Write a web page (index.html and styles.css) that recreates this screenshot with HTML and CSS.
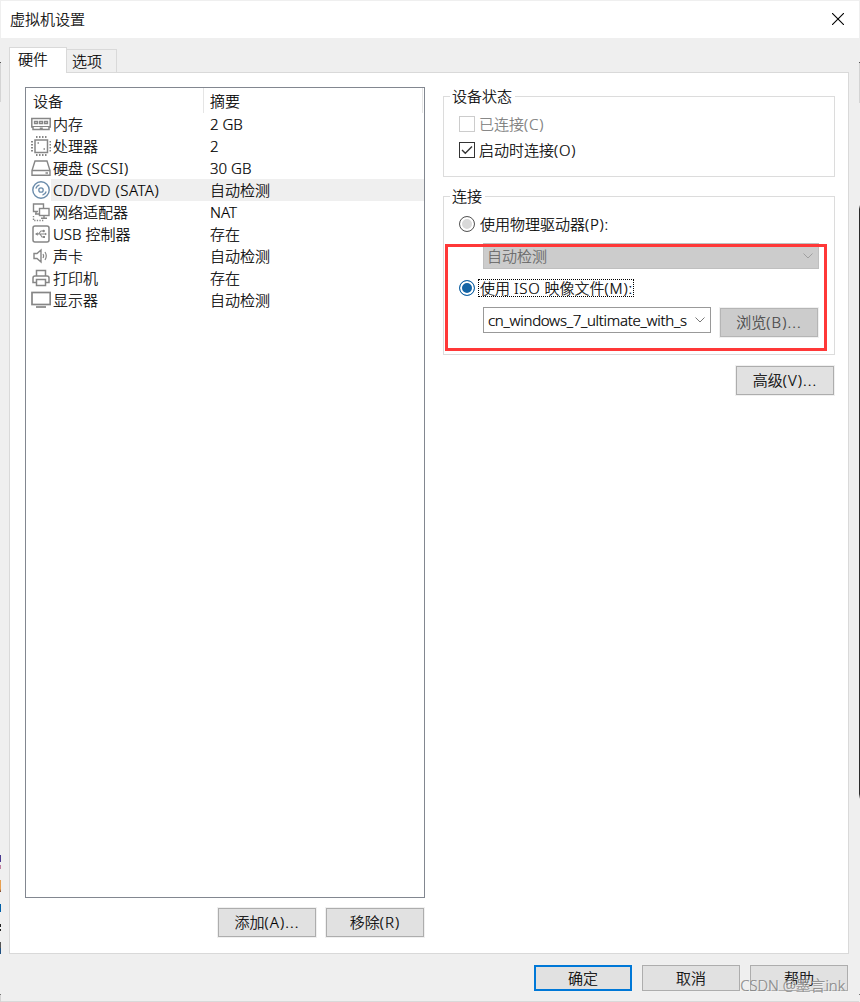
FILE: index.html
```html
<!DOCTYPE html>
<html lang="zh-CN">

<head>
    <meta charset="UTF-8">
    <meta name="viewport" content="width=device-width, initial-scale=1.0">
    <title>虚拟机设置</title>
    <link rel="stylesheet" href="styles.css">
</head>

<body>
    <div class="edge edge-left"></div>
    <div class="dialog">
        <div class="titlebar">
            <span>虚拟机设置</span>
            <svg class="close" width="12" height="12" viewBox="0 0 12 12"><path d="M0 0L12 12M12 0L0 12" stroke="#000" stroke-width="1.1"/></svg>
        </div>

        <div class="tabs">
            <div class="tab active">硬件</div>
            <div class="tab">选项</div>
        </div>

        <div class="panel">
            <div class="left">
                <div class="list">
                    <div class="list-header">
                        <div class="col-device">设备</div>
                        <div class="col-summary">摘要</div>
                    </div>
                    <div class="row">
                        <svg class="icon" viewBox="0 0 20 20" fill="none" stroke="#868686"><path d="M.8 4.5H19.2V13H18V15.5H11V14.3H9.5V15.5H2V13H.8Z" stroke-width="1.5"/><path d="M3.5 7.5H6.5V9.5H3.5ZM8.5 7.5H11.5V9.5H8.5ZM13.5 7.5H16.5V9.5H13.5Z" stroke-width="1.3"/><path d="M1 12.5H19"/></svg>
                        <div class="name">内存</div><div class="value">2 GB</div>
                    </div>
                    <div class="row">
                        <svg class="icon" viewBox="0 0 20 20" fill="none" stroke="#868686"><rect x="4" y="4" width="12.5" height="12.5" stroke-width="1.5"/><path d="M5 1H16M5 19H16" stroke-width="2" stroke-dasharray="1.5 1.5"/><path d="M1 5V16M19.5 5V16" stroke-width="2" stroke-dasharray="1.5 1.5"/><path d="M6.5 7H8M12.5 13H14" stroke-width="1.5"/></svg>
                        <div class="name">处理器</div><div class="value">2</div>
                    </div>
                    <div class="row">
                        <svg class="icon" viewBox="0 0 20 20" fill="none" stroke="#868686" stroke-width="1.4"><path d="M1 12.5L4 3H16L19 12.5V17.3H1ZM1 12.5H19M14.5 15H17"/></svg>
                        <div class="name">硬盘 <i>(SCSI)</i></div><div class="value">30 GB</div>
                    </div>
                    <div class="row selected">
                        <svg class="icon" viewBox="0 0 20 20" fill="none" stroke="#6b8cab"><circle cx="10" cy="10" r="8.2" stroke-width="1.4"/><circle cx="10" cy="10" r="2.2" stroke-width="1.3"/><path d="M4.8 8.5A5.5 5.5 0 0 1 8.5 4.8M15.2 11.5A5.5 5.5 0 0 1 11.5 15.2" stroke-width="1.3"/></svg>
                        <div class="name"><i>CD/DVD (SATA)</i></div><div class="value">自动检测</div>
                    </div>
                    <div class="row">
                        <svg class="icon" viewBox="0 0 20 20" fill="none" stroke="#868686" stroke-width="1.4"><path d="M7 9.5H2.5V2H12.5V6M4 12H8"/><rect x="8.5" y="6.5" width="9.5" height="7"/><path d="M13 13.5V16M10 16.2H16M5 9.5V12"/><path d="M2.5 14V18.5H13" stroke-dasharray="1.3 1.3"/></svg>
                        <div class="name">网络适配器</div><div class="value">NAT</div>
                    </div>
                    <div class="row">
                        <svg class="icon" viewBox="0 0 20 20" fill="none" stroke="#868686"><rect x="2" y="2" width="16" height="16" rx="2" stroke-width="1.5"/><path d="M5 10H15M7.5 10L10 7H12.5M9 10L11 13H13" stroke-width="1.1"/><path d="M4 10L6.8 8.3V11.7Z" fill="#868686" stroke="none"/><circle cx="12.7" cy="7" r="1.2" fill="#868686" stroke="none"/><path d="M12 12H14V14H12ZM14 8.8L16 10L14 11.2Z" fill="#868686" stroke="none"/></svg>
                        <div class="name">USB 控制器</div><div class="value">存在</div>
                    </div>
                    <div class="row">
                        <svg class="icon" viewBox="0 0 20 20" fill="none" stroke="#868686" stroke-width="1.4"><path d="M3 7.5H6L10 4V16L6 12.5H3Z"/><path d="M12 8Q13.2 10 12 12M14 6Q16.5 10 14 14" stroke-width="1.2"/></svg>
                        <div class="name">声卡</div><div class="value">自动检测</div>
                    </div>
                    <div class="row">
                        <svg class="icon" viewBox="0 0 20 20" fill="none" stroke="#868686" stroke-width="1.5"><path d="M5.5 8V2.5H14.5V8M5.5 14.5H2V10Q2 8 4 8H16Q18 8 18 10V14.5H14.5"/><rect x="5.5" y="11.5" width="9" height="6"/></svg>
                        <div class="name">打印机</div><div class="value">存在</div>
                    </div>
                    <div class="row">
                        <svg class="icon" viewBox="0 0 20 20" fill="none" stroke="#868686" stroke-width="1.7"><rect x="1" y="2.5" width="18.2" height="12"/><path d="M5 17H15"/></svg>
                        <div class="name">显示器</div><div class="value">自动检测</div>
                    </div>
                </div>
                <div class="list-buttons">
                    <button class="button">添加<i>(A)...</i></button>
                    <button class="button">移除<i>(R)</i></button>
                </div>
            </div>

            <div class="right">
                <div class="group status">
                    <span class="legend">设备状态</span>
                    <div class="option disabled"><span class="checkbox"></span>已连接<i>(C)</i></div>
                    <div class="option">
                        <span class="checkbox"><svg width="14" height="14" viewBox="0 0 14 14"><path d="M2 7L5.3 10.3L12 3.6" fill="none" stroke="#333" stroke-width="1.4"/></svg></span>启动时连接<i>(O)</i>
                    </div>
                </div>

                <div class="group connection">
                    <span class="legend">连接</span>
                    <div class="option"><span class="radio"></span>使用物理驱动器<i>(P):</i></div>
                    <div class="select off">自动检测
                        <svg width="10" height="6" viewBox="0 0 10 6"><path d="M.5 .5L5 5L9.5 .5" fill="none" stroke="#a0a0a0"/></svg>
                    </div>
                    <div class="option iso"><span class="radio checked"></span><span class="focus">使用 <i>ISO</i> 映像文件<i>(M):</i></span></div>
                    <div class="file-row">
                        <div class="select file"><i class="filename">cn_windows_7_ultimate_with_s</i>
                            <svg width="10" height="6" viewBox="0 0 10 6"><path d="M.5 .5L5 5L9.5 .5" fill="none" stroke="#777"/></svg>
                        </div>
                        <button class="button browse">浏览<i>(B)...</i></button>
                    </div>
                    <div class="highlight"></div>
                </div>
                <button class="button advanced">高级<i>(V)...</i></button>
            </div>
        </div>

        <div class="footer">
            <button class="button primary">确定</button>
            <button class="button">取消</button>
            <button class="button">帮助</button>
        </div>
        <div class="watermark">CSDN @墨言ink</div>
    </div>
    <div class="edge edge-right"></div>
</body>

</html>
```
FILE: styles.css
```css
* {
    box-sizing: border-box;
}

body {
    margin: 0;
    width: 860px;
    height: 1002px;
    display: flex;
    overflow: hidden;
    background-color: #efefef;
    font-family: "Noto Sans", "Noto Sans CJK SC", sans-serif;
    font-size: 15px;
    font-weight: 300;
    line-height: 22px;
    color: #000;
    white-space: nowrap;
    -webkit-text-stroke: 0.2px;
}

/* latin parts of the labels */
i {
    font-style: normal;
}

.edge {
    width: 1px;
    height: 1002px;
}

.edge-left {
    background: linear-gradient(#efefef 62px, #555 62px, #555 63px, #d4d4d4 63px, #d4d4d4 102px, #efefef 102px, #efefef 855px, #4a3a90 855px, #4a3a90 862px, #efefef 862px, #efefef 865px, #c080a0 865px, #c080a0 869px, #efefef 869px, #efefef 880px, #e8a050 880px, #e8a050 889px, #704030 892px, #efefef 892px, #efefef 904px, #0060a8 904px, #0060a8 912px, #efefef 912px, #efefef 924px, #222 924px, #222 927px, #efefef 927px, #efefef 929px, #222 929px, #222 931px, #efefef 931px, #efefef 942px, #555 942px, #555 948px, #205080 948px, #205080 954px, #efefef 954px, #efefef 994px, #777 994px, #777 995px, #d4d4d4 995px);
}

.edge-right {
    background: linear-gradient(#efefef 62px, #555 62px, #555 63px, #d4d4d4 63px, #d4d4d4 103px, #efefef 103px, #efefef 205px, #2b2b2b 209px, #2b2b2b 794px, #efefef 799px, #efefef 994px, #777 994px, #777 995px, #efefef 995px);
}

.dialog {
    position: relative;
    width: 858px;
    height: 1002px;
    border-top: 1px solid #efefef;
    border-bottom: 1px solid #d9d9d9;
}

.titlebar {
    height: 37px;
    padding: 0 15px 2px 9px;
    display: flex;
    align-items: center;
    justify-content: space-between;
    background-color: #fff;
}

.tabs {
    display: flex;
    align-items: flex-end;
    height: 34px;
    padding-left: 8px;
}

.tab {
    width: 50px;
    height: 23px;
    padding-left: 5px;
    border: 1px solid #d9d9d9;
    border-left: none;
    border-bottom: none;
}

.tab.active {
    position: relative;
    width: 58px;
    height: 26px;
    margin-bottom: -1px;
    padding-left: 8px;
    border-left: 1px solid #d9d9d9;
    background-color: #fff;
}

.panel {
    display: flex;
    width: 840px;
    height: 882px;
    margin-left: 8px;
    padding: 14px 13px 0 15px;
    border: 1px solid #d9d9d9;
    background-color: #fff;
}

.left {
    width: 400px;
}

.list {
    height: 811px;
    border: 1px solid #828790;
}

.list-header {
    display: flex;
    height: 25px;
    line-height: 26px;
    padding-right: 1px;
}

.col-device {
    width: 178px;
    padding-left: 7px;
    border-right: 1px solid #e5e5e5;
}

.col-summary {
    flex: 1;
    padding-left: 6px;
    border-right: 1px solid #e5e5e5;
}

.row {
    display: flex;
    height: 22px;
    padding-left: 5px;
}

.icon {
    width: 20px;
    height: 20px;
    margin-top: 1px;
}

.name {
    width: 153px;
    padding-left: 2px;
}

.name i {
    letter-spacing: 0.5px;
}

.value {
    flex: 1;
    padding-left: 6px;
}

.selected .name,
.selected .value {
    background-color: #efefef;
}

.list-buttons {
    display: flex;
    justify-content: flex-end;
    gap: 10px;
    margin: 10px 1px 0 0;
}

.button {
    width: 98px;
    height: 29px;
    padding: 0 0 1px;
    border: 1px solid #adadad;
    background-color: #e1e1e1;
    box-shadow: 0 0 0 1px #f0f0f0;
    color: #000;
    font: inherit;
}

.button i {
    letter-spacing: 1.1px;
}

.right {
    width: 392px;
    margin: 9px 0 0 18px;
}

.group {
    position: relative;
    border: 1px solid #dcdcdc;
}

.legend {
    position: absolute;
    top: -12px;
    left: 6px;
    padding: 0 3px 0 2px;
    background-color: #fff;
}

.status {
    height: 81px;
    padding: 16px 0 0 15px;
}

.connection {
    height: 159px;
    margin-top: 19px;
    padding: 16px 0 0 15px;
}

.option {
    display: flex;
    align-items: center;
    height: 22px;
}

.option i {
    letter-spacing: 0.8px;
}

.option + .option {
    margin-top: 4px;
}

.disabled {
    color: #777;
}

.checkbox,
.radio {
    width: 16px;
    height: 16px;
    margin-right: 4px;
    border: 1px solid #333;
}

.checkbox svg {
    display: block;
}

.disabled .checkbox {
    border-color: #ccc;
}

.radio {
    margin-right: 5px;
    border-radius: 50%;
    border-color: #555;
    background-color: #d9d9d9;
    box-shadow: inset 0 0 0 2px #fff;
}

.radio.checked {
    border-color: #1464a5;
    background-color: #1464a5;
}

.select {
    display: flex;
    align-items: center;
    justify-content: space-between;
    height: 26px;
    padding: 0 5px 0 4px;
    border: 1px solid #999;
}

.off {
    width: 336px;
    margin: 8px 0 0 24px;
    padding-left: 3px;
    border-color: #bfbfbf;
    background-color: #ccc;
    color: #666;
}

.iso {
    margin-top: 8px;
}

.focus {
    width: 156px;
    height: 18px;
    margin-left: -2px;
    padding-left: 1px;
    border: 1px dotted #000;
    line-height: 16px;
}

.file-row {
    display: flex;
    gap: 9px;
    margin: 8px 0 0 24px;
}

.file {
    width: 228px;
}

.filename {
    letter-spacing: -0.28px;
}

.browse {
    margin-top: 1px;
    border-color: #b5b5b5;
    background-color: #ccc;
    color: #444;
}

.highlight {
    position: absolute;
    top: 47px;
    left: 1px;
    width: 382px;
    height: 107px;
    border: 3px solid #ff3838;
}

.advanced {
    display: block;
    margin: 11px 1px 0 auto;
}

.footer {
    display: flex;
    justify-content: flex-end;
    gap: 10px;
    padding: 11px 11px 0 0;
}

.footer .button {
    height: 26px;
}

.footer .primary {
    border: 2px solid #0078d7;
}

.watermark {
    position: absolute;
    right: 14px;
    bottom: 5px;
    font-size: 14.8px;
    color: #8a8a8a;
    text-shadow: 1px 1px 0 #f5f5f5;
}
```
